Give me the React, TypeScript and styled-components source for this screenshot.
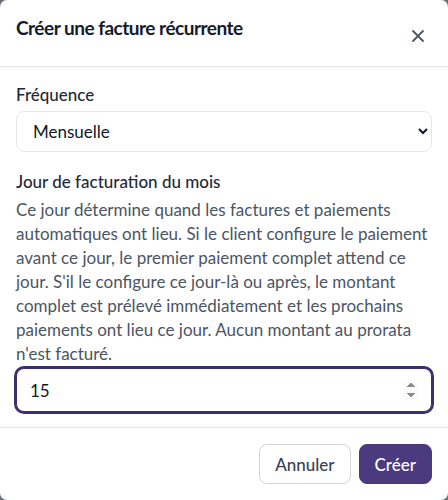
import React, { useState } from 'react';
import styled, { createGlobalStyle } from 'styled-components';

const GlobalStyle = createGlobalStyle`
*,
*::before,
*::after {
  margin: 0;
  padding: 0;
  box-sizing: border-box;
}
html, body {
  width: 100%;
  height: 100%;
}
body {
  background: #6b6f78;
  font-family: Lato, "Open Sans", Arial, sans-serif;
  overflow: hidden;
}
`;

function App() {
  const [frequency, setFrequency] = useState('monthly');
  const [day, setDay] = useState('15');

  return (
    <Modal>
      <GlobalStyle />
      <Header>
        <Title>Créer une facture récurrente</Title>
        <CloseButton aria-label="Fermer">
          <svg width="14" height="14" viewBox="0 0 14 14" fill="none">
            <path d="M2 2l10 10M12 2L2 12" stroke="#4b5563" strokeWidth="1.8" strokeLinecap="round" />
          </svg>
        </CloseButton>
      </Header>
      <Body>
        <Field>
          <Label>Fréquence</Label>
          <Select value={frequency} onChange={(e) => setFrequency(e.target.value)}>
            <option value="weekly">Hebdomadaire</option>
            <option value="monthly">Mensuelle</option>
            <option value="yearly">Annuelle</option>
          </Select>
        </Field>
        <Field>
          <Label>Jour de facturation du mois</Label>
          <Help>
            Ce jour détermine quand les factures et paiements automatiques ont lieu. Si le client
            configure le paiement avant ce jour, le premier paiement complet attend ce jour. S'il le
            configure ce jour-là ou après, le montant complet est prélevé immédiatement et les
            prochains paiements ont lieu ce jour. Aucun montant au prorata n'est facturé.
          </Help>
          <NumberInput
            type="number"
            min={1}
            max={31}
            value={day}
            autoFocus
            onChange={(e) => setDay(e.target.value)}
          />
        </Field>
      </Body>
      <Footer>
        <SecondaryButton>Annuler</SecondaryButton>
        <PrimaryButton>Créer</PrimaryButton>
      </Footer>
    </Modal>
  );
}

export default App;

const Modal = styled.div`
  width: 448px;
  height: 500px;
  background: #ffffff;
  border-radius: 7px;
  display: flex;
  flex-direction: column;
  overflow: hidden;
`;

const Header = styled.header`
  height: 67px;
  display: flex;
  align-items: flex-start;
  justify-content: space-between;
  padding: 14px 16px 0 16px;
  border-bottom: 1px solid #e5e7eb;
`;

const Title = styled.h2`
  font-size: 19px;
  font-weight: 700;
  line-height: 28px;
  letter-spacing: -0.5px;
  color: #141a2e;
`;

const CloseButton = styled.button`
  border: none;
  background: transparent;
  width: 24px;
  height: 24px;
  margin-top: 10px;
  margin-right: 2px;
  display: flex;
  align-items: center;
  justify-content: center;
  cursor: pointer;
`;

const Body = styled.div`
  flex: 1;
  display: flex;
  flex-direction: column;
  gap: 16px;
  padding: 14px 16px 0 16px;
  border-bottom: 1px solid #e5e7eb;
`;

const Field = styled.div`
  display: flex;
  flex-direction: column;
`;

const Label = styled.label`
  font-size: 17px;
  font-weight: 500;
  line-height: 28px;
  color: #1f2937;
  margin-bottom: 2px;
`;

const Help = styled.p`
  font-size: 17px;
  line-height: 24px;
  color: #4b5563;
  margin-bottom: 2px;
`;

const Select = styled.select`
  height: 41px;
  width: 100%;
  padding: 0 8px 0 12px;
  font-family: inherit;
  font-size: 17px;
  color: #111827;
  background: #ffffff;
  border: 1px solid #e5e7eb;
  border-radius: 8px;
  outline: none;
`;

const NumberInput = styled.input`
  height: 44px;
  width: 100%;
  padding: 0 12px 0 13px;
  font-family: inherit;
  font-size: 17px;
  color: #111827;
  background: #ffffff;
  border: 1px solid #d1d5db;
  border-radius: 8px;
  outline: none;

  &:focus {
    border-color: #3d2f6b;
    box-shadow: 0 0 0 1px #ffffff inset, 0 0 0 2px #3d2f6b;
  }
`;

const Footer = styled.footer`
  height: 72px;
  display: flex;
  align-items: center;
  justify-content: flex-end;
  gap: 8px;
  padding: 0 16px;
`;

const ButtonBase = styled.button`
  height: 40px;
  padding: 0 15px;
  font-family: inherit;
  font-size: 17px;
  font-weight: 500;
  border-radius: 8px;
  cursor: pointer;
`;

const SecondaryButton = styled(ButtonBase)`
  background: #ffffff;
  color: #374151;
  border: 1px solid #d1d5db;
`;

const PrimaryButton = styled(ButtonBase)`
  background: #4b3a7e;
  color: #ffffff;
  border: 1px solid #4b3a7e;
`;
